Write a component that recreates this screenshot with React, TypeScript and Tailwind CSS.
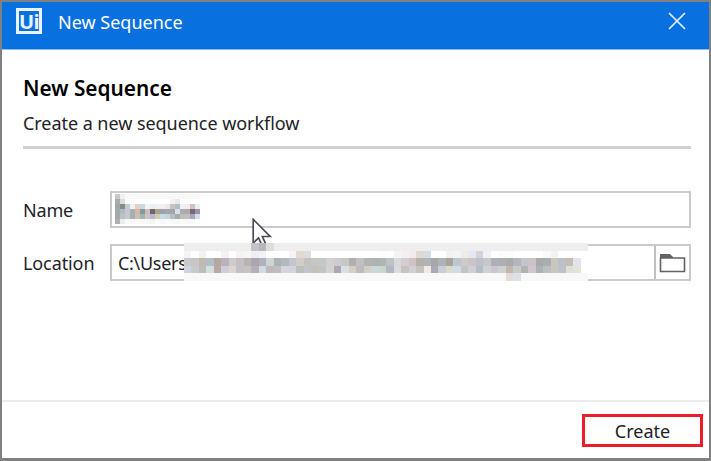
const nameRows: string[][] = [
  ['#c8c8c8', '#f0f0f0', '#f8f8f8', '#f8f8f8', '#f8f8f8', '#f8f8f8', '#f8f8f8', '#f8f8f8', '#f8f8f8', '#f8f8f8', '#f8f8f8', '#f8f8f8', '#f8f8f8', '#f8f8f8', '#f8f8f8', '#f8f8f8', '#f8f8f8'],
  ['#ababab', '#dadddd', '#fafafa', '#ffffff', '#ffffff', '#ffffff', '#ffffff', '#ffffff', '#ffffff', '#ffffff', '#ffffff', '#f5f0f2', '#e6e9eb', '#ffffff', '#ffffff', '#ffffff', '#ffffff'],
  ['#a5a5a5', '#858b8d', '#c7cbcd', '#f1f1f2', '#e8cfc1', '#c4dae4', '#f4f4f4', '#eeeef0', '#eef1f4', '#f5eeee', '#eceae8', '#d0bfc3', '#b1bec4', '#eff2f2', '#f2edef', '#d4bfc3', '#e8f0f7'],
  ['#a5a8a9', '#aebdc5', '#c6c8ce', '#a5b2b5', '#d6b7a1', '#83999f', '#cfbdb5', '#706570', '#aaa18f', '#9ca2ad', '#a0a7b1', '#a8a4a7', '#d7dfe9', '#a8afb2', '#b8a59d', '#6b6c7d', '#a58f9c'],
  ['#a6a6a6', '#b5c3ca', '#c8c7cd', '#a6afb1', '#cbbeb2', '#a4b3b7', '#cac5c1', '#b8b9c8', '#d2ccb6', '#c5dce1', '#ccd2e0', '#b4c0c2', '#a6adaf', '#c3bdb4', '#bcc0c8', '#afa2b4', '#d0e0f0'],
  ['#b0b0b0', '#ededed', '#fafafa', '#f8f8f8', '#fafafa', '#f8f8f8', '#f7f7f7', '#f4f4f4', '#fafafa', '#f7f7f7', '#fafafa', '#f8f8f8', '#f8f8f8', '#fafafa', '#f8f8f8', '#f8f8f8', '#fdfdfd'],
];

const pathRows: string[][] = [
  ['#eeeeee', '#eeeeee', '#eeeeee', '#eeeeee', '#eeeeee', '#eeeeee', '#eeeeee', '#eeeeee', '#eeeeee', '#c3c3c5', '#b7b6bb', '#dddddd', ...Array<string>(42).fill('#eeeeee')],
  ['#f4f4f4', '#ffffff', '#f3f3f4', '#ffffff', '#ffffff', '#f4f0f6', '#ffffff', '#f7f1f5', '#f7f6f7', '#f1eef3', '#f4f0f7', '#ffffff', '#ffffff', '#ffffff', '#f5f3f4', '#dfdbd1', '#d8dee4', '#ffffff',
    '#ffffff', '#ffffff', '#ffffff', '#ffffff', '#ffffff', '#ffffff', '#ffffff', '#ffffff', '#fdfdfd', '#ffffff', '#f2f4f7', '#f3eff3', '#f2eced', '#dedad3', '#d8dce1', '#ffffff', '#ffffff', '#f0f3f1',
    '#f2f5f4', '#f0ebe7', '#e4e9ef', '#d2d4d7', '#f0f1f6', '#ffffff', '#fbfbfb', '#fcfcfc', '#ffffff', '#ffffff', '#ffffff', '#ffffff', '#fafafa', '#f3f3f3', '#ffffff', '#ffffff', '#ffffff', '#ffffff'],
  ['#c9c8cb', '#c6c5c7', '#c4b9ad', '#b2bec8', '#b5a8a2', '#bcb1b8', '#cfcbcd', '#c4c1c5', '#b9b4b4', '#aaa5b0', '#b2b0b8', '#cdd4d4', '#aab1b7', '#b4b8ba', '#c4c4ce', '#d0cec8', '#c5c2bf', '#c5c5c3',
    '#c6c8c7', '#d1d1d0', '#d1cad6', '#c5c8c6', '#b1afaf', '#c3bec1', '#b0b5b3', '#adb2b4', '#aeb5b2', '#bec2c4', '#d9d9dc', '#d6cdd3', '#d1c3c4', '#b3b1aa', '#b0b4b5', '#a5a7aa', '#adb3bd', '#aca29c',
    '#bdc7cf', '#d0c9c9', '#cbc5c7', '#bdc1c8', '#c4c8cb', '#afafbc', '#adaeb6', '#abaca7', '#b4b6bc', '#c3c5ca', '#cbc4c7', '#aca8a7', '#a9afb1', '#cbc7bc', '#bbc1c7', '#c6bcb3', '#e1e4ee', '#ffffff'],
  ['#ced4df', '#c9c9c9', '#bbbcc0', '#d4dfdd', '#b5aaa6', '#ccced8', '#dfd4d1', '#c2c1c6', '#c7c3c0', '#b2b2b8', '#d2dae5', '#bfbab7', '#bdbfc0', '#d6d4dd', '#d3d3df', '#bbbfbc', '#c1c5c7', '#c4c0bb',
    '#c3c4c3', '#d2d4d3', '#ada7b1', '#d7e0e5', '#d7cdc5', '#bfbabc', '#d3cfc4', '#cad8d7', '#cbd5cf', '#b5b6c3', '#dcdadc', '#c5c4c1', '#d0cfd1', '#c5c3bb', '#f0e9e4', '#a6abb6', '#cbcdd1', '#dbd9cb',
    '#cfdbe5', '#c3c4c2', '#cfd0d4', '#b6bdc8', '#d1d1d3', '#cdc5d0', '#cad1d0', '#c1b6b0', '#cacaca', '#b0b2b4', '#d0c6cb', '#acb1b6', '#bbbfc1', '#cac7be', '#bbc3ca', '#dedfd8', '#e3e3dc', '#ffffff'],
  [...Array<string>(43).fill('#f8f8f8'), '#e5dcd9', '#dce0e8', ...Array<string>(9).fill('#f8f8f8')],
];

// Equal-sized colour cells that conceal the value of a field.
function Mosaic({ rows, className }: { rows: string[][]; className: string }) {
  return (
    <div className={`flex flex-col ${className}`}>
      {rows.map((row, y) => (
        <div key={y} className="flex min-h-0 flex-1">
          {row.map((color, x) => (
            <span key={x} className="flex-1" style={{ backgroundColor: color }} />
          ))}
        </div>
      ))}
    </div>
  );
}

function Logo() {
  return (
    <div className="flex h-[26px] w-[26px] items-center justify-center border-[3px] border-[#e9f4ff]">
      <span className="pt-px font-['Open_Sans'] text-[20px] leading-[20px] font-bold tracking-[-0.5px] text-[#e9f4ff]">Ui</span>
    </div>
  );
}

function Cursor() {
  return (
    <svg className="absolute top-[25px] left-[140px]" width="21" height="30" viewBox="0 0 21 30">
      <path d="M1.2 1.3V25l5.4-5 3.7 8 3.6-1.7-3.5-7.8h7.7Z" fill="white" stroke="#4b4b55" strokeWidth="1.7" />
    </svg>
  );
}

export default function App() {
  return (
    <div className="flex h-[461px] w-[711px] flex-col border-2 border-b-[3px] border-[#808080] bg-white font-['Noto_Sans','Open_Sans',sans-serif] text-[18px] text-[#222226]">
      <header className="flex h-12 shrink-0 items-start border-b border-[#8bbdf2] bg-[#0971df] pr-[23px] pl-[14px] text-white">
        <div className="mt-[6px]">
          <Logo />
        </div>
        <span className="mt-[6px] ml-4 flex-1 leading-[28px]">New Sequence</span>
        <svg className="mt-[10px]" width="18" height="18" viewBox="0 0 18 18" stroke="#e3f0ff" strokeWidth="1.7">
          <path d="M1 1 17 17M17 1 1 17" />
        </svg>
      </header>

      <main className="flex flex-1 flex-col pr-[18px] pl-[21px]">
        <h1 className="mt-6 text-[20.8px] leading-[28px] font-semibold text-black">New Sequence</h1>
        <p className="mt-[7px] leading-[28px] tracking-[-0.05px]">Create a new sequence workflow</p>
        <hr className="mt-[9px] h-[3px] border-0 bg-[#d0d0d0]" />

        <div className="mt-[42px] flex h-[37px] items-center">
          <label className="w-[87px] shrink-0 pt-0.5 tracking-[-0.2px]">Name</label>
          <div className="relative flex h-full flex-1 border-2 border-[#cacaca] pt-px pl-[3px]">
            <Mosaic rows={nameRows} className="h-[30px] w-[85px]" />
            <Cursor />
          </div>
        </div>

        <div className="mt-4 flex h-[37px] items-center">
          <label className="w-[87px] shrink-0 pt-0.5 tracking-[-0.1px]">Location</label>
          <div className="relative flex h-full flex-1 items-center border-2 border-[#cacaca] pl-[6px]">
            <span className="flex-1 pt-0.5 tracking-[-0.3px]">C:\Users</span>
            <Mosaic rows={pathRows} className="absolute top-[-3px] left-[72px] h-[37.5px] w-[404px]" />
            <button className="flex h-full w-[35px] items-center justify-center border-l-2 border-[#c0c0c0]">
              <svg width="27" height="20" viewBox="0 0 27 20">
                <path d="M1 5V1h10l3 3v1Z" fill="#626262" />
                <path d="M1.5 5h24v13.5h-24Z" fill="white" stroke="#626262" strokeWidth="1.6" />
              </svg>
            </button>
          </div>
        </div>
      </main>

      <footer className="flex h-[58px] shrink-0 justify-end border-t-2 border-[#ececec] pt-[12px] pr-[6px]">
        <button className="flex h-[33px] w-[121px] items-center justify-center border-[3px] border-[#ed1c29] leading-[28px]">Create</button>
      </footer>
    </div>
  );
}
